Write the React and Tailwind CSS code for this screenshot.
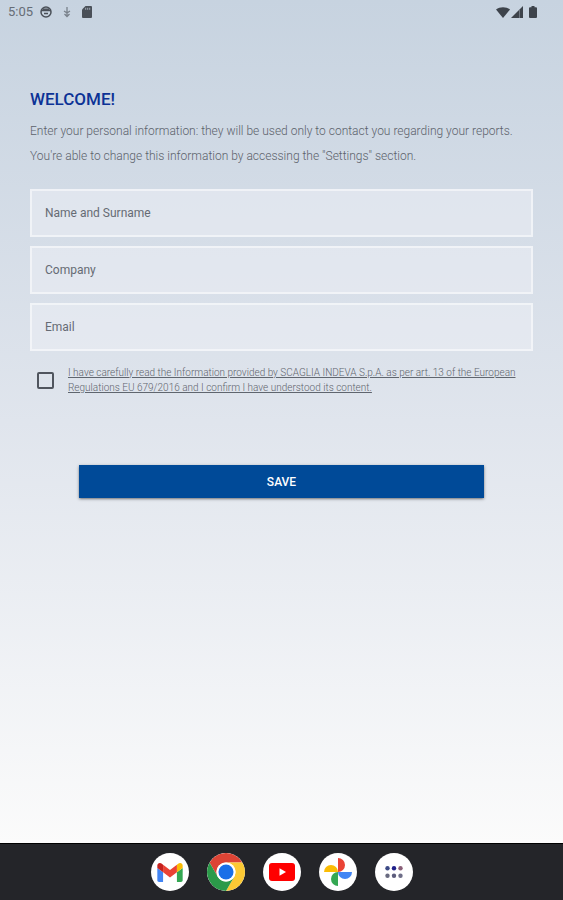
import { useState } from "react"

const FIELDS = [
  { id: "name", label: "Name and Surname", type: "text" },
  { id: "company", label: "Company", type: "text" },
  { id: "email", label: "Email", type: "email" },
]

function StatusBar() {
  return (
    <header className="flex h-6 items-center justify-between pl-2 pr-[26px] text-[#4a5058]">
      <div className="flex items-center">
        <span className="w-8 text-[13px] text-[#666d76]">5:05</span>
        <svg viewBox="0 0 12 12" className="h-3 w-3" fill="none" stroke="currentColor" strokeWidth="1.5">
          <circle cx="6" cy="6" r="5" />
          <path d="M1 4.600h10M4 7.600h4" />
          <path d="M3 3.200h6" />
        </svg>
        <svg viewBox="0 0 10 12" className="ml-[10px] h-3 w-[10px]" fill="none" stroke="#78808a" strokeWidth="1.3">
          <path d="M5 1v8M2 5l3 2 3-2M2.500 8 5 10.500l2.500-2.500" />
        </svg>
        <svg viewBox="0 0 10 12" className="ml-[10px] h-3 w-[10px]">
          <path fill="currentColor" d="M3.500 0H9a1 1 0 0 1 1 1v10a1 1 0 0 1-1 1H1a1 1 0 0 1-1-1V3.500z" />
          <path stroke="#aab3be" strokeWidth=".9" d="M3.700 1.800v2M5.700 1.800v2M7.700 1.800v2" />
        </svg>
      </div>
      <div className="flex items-center text-[#3d434b]">
        <svg viewBox="0 0 14 11" className="h-[11px] w-[14px]" fill="currentColor">
          <path d="M7 11 0 2.500C4 -.500 10 -.500 14 2.500z" />
        </svg>
        <svg viewBox="0 0 12 12" className="ml-px h-3 w-3">
          <path fill="currentColor" d="M12 0v12H0z" />
          <path stroke="#7d858f" strokeWidth=".8" d="M8.500 4v8" />
        </svg>
        <svg viewBox="0 0 8 12" className="ml-[6px] h-3 w-2" fill="currentColor">
          <path d="M2.500 0h3v1.200H7a1 1 0 0 1 1 1V11a1 1 0 0 1-1 1H1a1 1 0 0 1-1-1V2.200a1 1 0 0 1 1-1h1.500z" />
        </svg>
      </div>
    </header>
  )
}

function GmailIcon() {
  return (
    <svg viewBox="52 42 88 66" className="h-[19px] w-[26px]">
      <path fill="#4285f4" d="M58 108h14V74L52 59v43c0 3.320 2.690 6 6 6" />
      <path fill="#34a853" d="M120 108h14c3.320 0 6-2.690 6-6V59l-20 15" />
      <path fill="#fbbc04" d="M120 48v26l20-15v-8c0-7.420-8.470-11.650-14.400-7.200" />
      <path fill="#ea4335" d="M72 74V48l24 18 24-18v26L96 92" />
      <path fill="#c5221f" d="M52 51v8l20 15V48l-5.600-4.200c-5.940-4.450-14.400-.220-14.400 7.200" />
    </svg>
  )
}

function ChromeIcon() {
  return (
    <svg viewBox="0 0 48 48" className="h-full w-full">
      <path fill="#dd4435" d="M24 12h20.785A24 24 0 0 0 3.215 12l10.393 18A12 12 0 0 1 24 12" />
      <path fill="#fcc934" d="M34.392 30 24 48A24 24 0 0 0 44.785 12H24a12 12 0 0 1 10.392 18" />
      <path fill="#2b9a49" d="M13.608 30 3.215 12A24 24 0 0 0 24 48l10.392-18a12 12 0 0 1-20.784 0" />
      <circle cx="24" cy="24" r="12" fill="#fff" />
      <circle cx="24" cy="24" r="9.500" fill="#1a6fe8" />
    </svg>
  )
}

function YoutubeIcon() {
  return (
    <svg viewBox="0 0 26 18" className="h-[18px] w-[26px]">
      <rect width="26" height="18" rx="3" fill="#f00" />
      <path fill="#fff" d="M10.500 5.200v7.600L17 9z" />
    </svg>
  )
}

function PhotosIcon() {
  return (
    <svg viewBox="0 0 28 28" className="h-7 w-7">
      <path fill="#ea4335" d="M14 0a7 7 0 0 1 0 14z" />
      <path fill="#4285f4" d="M28 14a7 7 0 0 1-14 0z" />
      <path fill="#34a853" d="M14 28a7 7 0 0 1 0-14z" />
      <path fill="#fbbc04" d="M0 14a7 7 0 0 1 14 0z" />
    </svg>
  )
}

function AppsIcon() {
  return (
    <svg viewBox="0 0 18 12" className="h-3 w-[18px]">
      <circle cx="2.500" cy="2.300" r="2.200" fill="#3c4a86" />
      <circle cx="9" cy="2.300" r="2.200" fill="#20208a" />
      <circle cx="15.500" cy="2.300" r="2.200" fill="#8a5f78" />
      <circle cx="2.500" cy="9.700" r="2.200" fill="#686a80" />
      <circle cx="9" cy="9.700" r="2.200" fill="#5c5c7c" />
      <circle cx="15.500" cy="9.700" r="2.200" fill="#6e6e88" />
    </svg>
  )
}

const DOCK = [
  { name: "Gmail", Icon: GmailIcon },
  { name: "Chrome", Icon: ChromeIcon },
  { name: "YouTube", Icon: YoutubeIcon },
  { name: "Photos", Icon: PhotosIcon },
  { name: "All apps", Icon: AppsIcon },
]

function Dock() {
  return (
    <nav className="flex h-14 items-center justify-center gap-[18px] bg-[#242529]">
      {DOCK.map(({ name, Icon }) => (
        <button
          key={name}
          type="button"
          aria-label={name}
          className="flex h-[38px] w-[38px] items-center justify-center overflow-hidden rounded-full bg-white"
        >
          <Icon />
        </button>
      ))}
    </nav>
  )
}

export default function App() {
  const [values, setValues] = useState({ name: "", company: "", email: "" })
  const [accepted, setAccepted] = useState(false)

  const handleChange = (e) => {
    setValues({ ...values, [e.target.name]: e.target.value })
  }

  return (
    <div className="flex min-h-screen flex-col bg-[#242529] font-['Roboto',sans-serif]">
      <div className="flex-1 border-b border-black bg-linear-to-b from-[#c7d3e0] via-[#e0e5ed] via-50% to-[#fbfbfb]">
        <StatusBar />
        <main className="px-[30px] pt-16">
          <h1 className="text-[17px] leading-[22px] font-medium text-[#0c3296]">WELCOME!</h1>
          <div className="mt-[9px] text-xs leading-[25px] font-light text-[#5c626b]">
            <p>Enter your personal information: they will be used only to contact you regarding your reports.</p>
            <p>You're able to change this information by accessing the "Settings" section.</p>
          </div>

          <form onSubmit={(e) => e.preventDefault()}>
            <div className="mt-5 flex flex-col gap-[9px]">
              {FIELDS.map((field) => (
                <input
                  key={field.id}
                  name={field.id}
                  type={field.type}
                  aria-label={field.label}
                  placeholder={field.label}
                  value={values[field.id]}
                  onChange={handleChange}
                  className="block h-12 w-full border-2 border-white/50 bg-[#eef0f6]/50 px-[13px] text-xs text-[#4d535c] outline-none placeholder:text-[#666b74] focus:border-white"
                />
              ))}
            </div>

            <div className="mt-[14px] flex items-center pl-[7px]">
              <input
                id="privacy"
                type="checkbox"
                checked={accepted}
                onChange={(e) => setAccepted(e.target.checked)}
                className="h-[17px] w-[17px] shrink-0 appearance-none rounded-xs border-2 border-[#50555e] checked:bg-[#004a98]"
              />
              <label htmlFor="privacy" className="ml-[14px] text-[10px] leading-[15px] font-light text-[#5f656e] underline">
                I have carefully read the Information provided by SCAGLIA INDEVA S.p.A. as per art. 13 of the European
                Regulations EU 679/2016 and I confirm I have understood its content.
              </label>
            </div>

            <div className="mt-[70px] px-[49px]">
              <button
                type="submit"
                className="block h-[33px] w-full bg-[#004a98] text-xs font-medium text-white shadow-sm shadow-black/40"
              >
                SAVE
              </button>
            </div>
          </form>
        </main>
      </div>
      <Dock />
    </div>
  )
}
